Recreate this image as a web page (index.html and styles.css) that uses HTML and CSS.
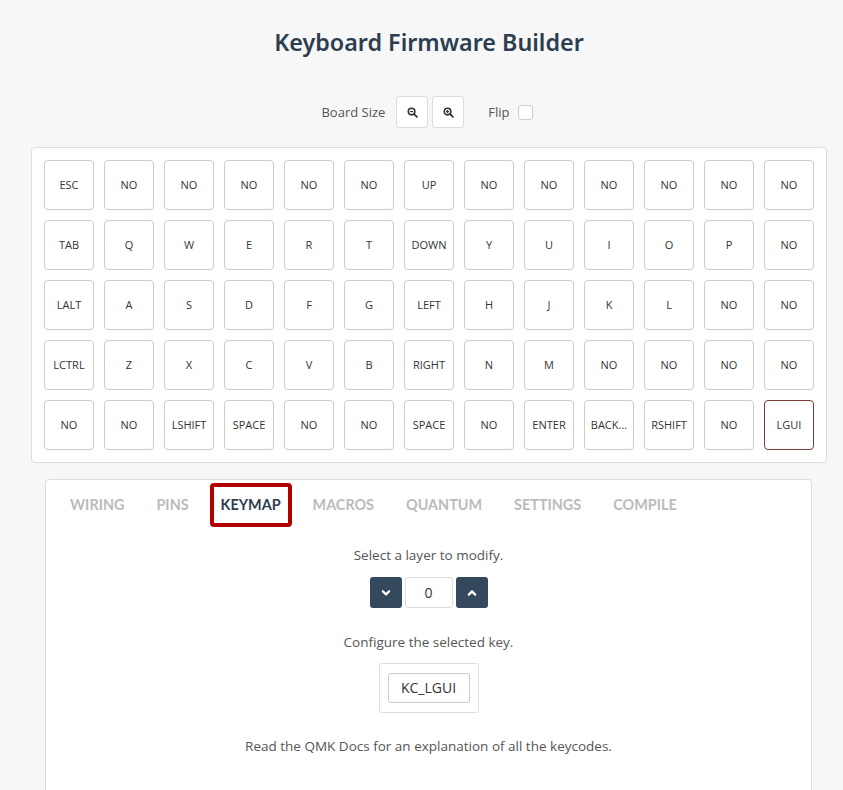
FILE: index.html
```html
<!DOCTYPE html>
<html>
<head>
<meta charset="utf-8">
<title>Keyboard Firmware Builder</title>
<link rel="stylesheet" href="styles.css">
</head>
<body>
<div class="app">
  <h1 class="title">Keyboard Firmware Builder</h1>
  <div class="controls">
    <span class="label">Board Size</span>
    <button class="icon-btn" aria-label="Zoom out">
      <svg width="11" height="11" viewBox="0 0 12 12"><circle cx="5" cy="5" r="3.6" fill="none" stroke="#333" stroke-width="1.7"/><line x1="7.6" y1="7.6" x2="10.8" y2="10.8" stroke="#333" stroke-width="1.9" stroke-linecap="round"/><line x1="3.3" y1="5" x2="6.7" y2="5" stroke="#333" stroke-width="1.3"/></svg>
    </button>
    <button class="icon-btn" aria-label="Zoom in">
      <svg width="11" height="11" viewBox="0 0 12 12"><circle cx="5" cy="5" r="3.6" fill="none" stroke="#333" stroke-width="1.7"/><line x1="7.6" y1="7.6" x2="10.8" y2="10.8" stroke="#333" stroke-width="1.9" stroke-linecap="round"/><line x1="3.3" y1="5" x2="6.7" y2="5" stroke="#333" stroke-width="1.3"/><line x1="5" y1="3.3" x2="5" y2="6.7" stroke="#333" stroke-width="1.3"/></svg>
    </button>
    <span class="label flip">Flip</span>
    <span class="checkbox"></span>
  </div>

  <div class="keyboard">
    <div class="key">ESC</div><div class="key">NO</div><div class="key">NO</div><div class="key">NO</div><div class="key">NO</div><div class="key">NO</div><div class="key">UP</div><div class="key">NO</div><div class="key">NO</div><div class="key">NO</div><div class="key">NO</div><div class="key">NO</div><div class="key">NO</div>
    <div class="key">TAB</div><div class="key">Q</div><div class="key">W</div><div class="key">E</div><div class="key">R</div><div class="key">T</div><div class="key">DOWN</div><div class="key">Y</div><div class="key">U</div><div class="key">I</div><div class="key">O</div><div class="key">P</div><div class="key">NO</div>
    <div class="key">LALT</div><div class="key">A</div><div class="key">S</div><div class="key">D</div><div class="key">F</div><div class="key">G</div><div class="key">LEFT</div><div class="key">H</div><div class="key">J</div><div class="key">K</div><div class="key">L</div><div class="key">NO</div><div class="key">NO</div>
    <div class="key">LCTRL</div><div class="key">Z</div><div class="key">X</div><div class="key">C</div><div class="key">V</div><div class="key">B</div><div class="key">RIGHT</div><div class="key">N</div><div class="key">M</div><div class="key">NO</div><div class="key">NO</div><div class="key">NO</div><div class="key">NO</div>
    <div class="key">NO</div><div class="key">NO</div><div class="key">LSHIFT</div><div class="key">SPACE</div><div class="key">NO</div><div class="key">NO</div><div class="key">SPACE</div><div class="key">NO</div><div class="key">ENTER</div><div class="key">BACK...</div><div class="key">RSHIFT</div><div class="key">NO</div><div class="key selected">LGUI</div>
  </div>

  <div class="panel">
    <div class="tabs">
      <span class="tab">WIRING</span>
      <span class="tab">PINS</span>
      <span class="tab active">KEYMAP</span>
      <span class="tab">MACROS</span>
      <span class="tab">QUANTUM</span>
      <span class="tab">SETTINGS</span>
      <span class="tab">COMPILE</span>
    </div>
    <div class="content">
      <p class="text first">Select a layer to modify.</p>
      <div class="layer">
        <button class="dark-btn" aria-label="Previous layer">
          <svg width="10" height="8" viewBox="0 0 10 8"><polyline points="1.8,2.2 5,5.4 8.2,2.2" fill="none" stroke="#fff" stroke-width="2.2" stroke-linecap="round" stroke-linejoin="round"/></svg>
        </button>
        <span class="layer-input">0</span>
        <button class="dark-btn" aria-label="Next layer">
          <svg width="10" height="8" viewBox="0 0 10 8"><polyline points="1.8,5.6 5,2.4 8.2,5.6" fill="none" stroke="#fff" stroke-width="2.2" stroke-linecap="round" stroke-linejoin="round"/></svg>
        </button>
      </div>
      <p class="text second">Configure the selected key.</p>
      <div class="keybox"><span class="keycode">KC_LGUI</span></div>
      <p class="text third">Read the QMK Docs for an explanation of all the keycodes.</p>
    </div>
  </div>
</div>
</body>
</html>
```

FILE: styles.css
```css
html, body {
  margin: 0;
  padding: 0;
  background: #f7f7f7;
  font-family: "Open Sans", "Noto Sans", sans-serif;
  color: #555;
}

.app {
  width: 796px;
  margin-left: 31px;
  padding-top: 26px;
}

.title {
  margin: 0;
  text-align: center;
  font-family: "Noto Sans", sans-serif;
  font-weight: 600;
  font-size: 23.3px;
  line-height: 33px;
  color: #2c3e50;
}

.controls {
  display: flex;
  align-items: center;
  justify-content: center;
  margin-top: 37px;
  height: 32px;
  padding-right: 4px;
}

.label {
  font-size: 13px;
  color: #555;
  margin-right: 11px;
}

.label.flip {
  margin-left: 20px;
  margin-right: 8px;
}

.icon-btn {
  width: 32px;
  height: 32px;
  margin-right: 4px;
  background: #fff;
  border: 1px solid #ddd;
  border-radius: 3px;
  display: flex;
  align-items: center;
  justify-content: center;
  padding: 0;
}

.checkbox {
  width: 13px;
  height: 13px;
  border: 1px solid #ccc;
  border-radius: 3px;
  background: #fff;
}

.keyboard {
  margin-top: 19px;
  background: #fff;
  border: 1px solid #ddd;
  border-radius: 4px;
  padding: 12px;
  display: grid;
  grid-template-columns: repeat(13, 50px);
  grid-auto-rows: 50px;
  gap: 10px;
}

.key {
  box-sizing: border-box;
  border: 1px solid #ccc;
  border-radius: 4px;
  display: flex;
  align-items: center;
  justify-content: center;
  font-family: "Open Sans", sans-serif;
  font-size: 11px;
  color: #333;
  background: #fff;
  white-space: nowrap;
  padding-bottom: 1px;
}

.key.selected {
  border-color: #7b3b3b;
}

.panel {
  margin: 16px 0 0 14px;
  width: 767px;
  box-sizing: border-box;
  background: #fff;
  border: 1px solid #ddd;
  border-bottom: none;
  border-radius: 4px 4px 0 0;
  min-height: 330px;
}

.tabs {
  display: flex;
  gap: 10px;
  padding: 3px 13px 0;
}

.tab {
  font-family: Lato, sans-serif;
  font-weight: 700;
  font-size: 14.4px;
  line-height: 36px;
  padding: 0 7px;
  border: 4px solid transparent;
  border-radius: 4px;
  color: #bbb;
}

.tab.active {
  border-color: #b00000;
  color: #2c3e50;
}

.content {
  text-align: center;
}

.text {
  margin: 0;
  font-size: 13.5px;
  line-height: 18px;
  color: #555;
}

.text.first { margin-top: 19px; }
.text.second { margin-top: 25px; }
.text.third { margin-top: 24px; }

.layer {
  display: flex;
  justify-content: center;
  gap: 3px;
  margin-top: 13px;
  height: 31px;
}

.dark-btn {
  width: 32px;
  height: 31px;
  border: none;
  border-radius: 3px;
  background: #34495e;
  display: flex;
  align-items: center;
  justify-content: center;
  padding: 0;
}

.layer-input {
  box-sizing: border-box;
  width: 48px;
  height: 31px;
  border: 1px solid #ddd;
  border-radius: 3px;
  line-height: 29px;
  font-size: 14px;
  color: #333;
}

.keybox {
  box-sizing: border-box;
  width: 100px;
  height: 50px;
  margin: 12px auto 0;
  border: 1px solid #ddd;
  border-radius: 3px;
  display: flex;
  align-items: center;
  justify-content: center;
}

.keycode {
  box-sizing: border-box;
  width: 82px;
  height: 30px;
  border: 1px solid #ccc;
  border-radius: 3px;
  font-size: 14px;
  line-height: 28px;
  color: #333;
}
```
